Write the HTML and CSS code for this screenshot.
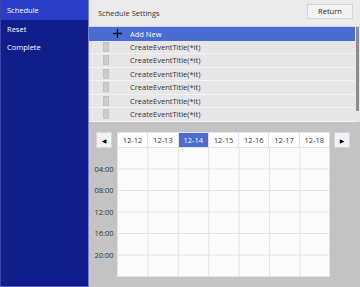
FILE: index.html
```html
<!DOCTYPE html>
<html>
<head>
    <title>Schedule Settings</title>
    <meta charset=utf-8>
    <meta name=viewport content="width=device-width, initial-scale=1">
    <link rel="stylesheet" href="styles.css">
</head>
<body>
    <div id="app">
        <div id="side">
            <div class="menu active">Schedule</div>
            <div class="menu">Reset</div>
            <div class="menu">Complete</div>
        </div>
        <div id="main">
            <div id="head">
                <span class="title">Schedule Settings</span>
                <button class="btn-return">Return</button>
            </div>
            <div id="list">
                <div class="rows">
                    <div class="row add">
                        <svg class="plus" width="9" height="9" viewBox="0 0 9 9"><path d="M4.5 0V9M0 4.5H9" stroke="#111" stroke-width="1.4"/></svg>
                        <span>Add New</span>
                    </div>
                    <div class="row"><i class="chk"></i><span>CreateEventTitle(*it)</span></div>
                    <div class="row"><i class="chk"></i><span>CreateEventTitle(*it)</span></div>
                    <div class="row"><i class="chk"></i><span>CreateEventTitle(*it)</span></div>
                    <div class="row"><i class="chk"></i><span>CreateEventTitle(*it)</span></div>
                    <div class="row"><i class="chk"></i><span>CreateEventTitle(*it)</span></div>
                    <div class="row"><i class="chk"></i><span>CreateEventTitle(*it)</span></div>
                </div>
                <div class="scroll"><div class="thumb"></div></div>
            </div>
            <div id="cal">
                <div class="times">
                    <button class="nav">&#9664;</button>
                    <div class="hours">
                        <span>04:00</span>
                        <span>08:00</span>
                        <span>12:00</span>
                        <span>16:00</span>
                        <span>20:00</span>
                    </div>
                </div>
                <div class="week">
                    <div class="days">
                        <div class="day">12-12</div>
                        <div class="day">12-13</div>
                        <div class="day on">12-14</div>
                        <div class="day">12-15</div>
                        <div class="day">12-16</div>
                        <div class="day">12-17</div>
                        <div class="day">12-18</div>
                    </div>
                    <div class="grid"></div>
                </div>
                <div class="right">
                    <button class="nav">&#9654;</button>
                </div>
            </div>
        </div>
    </div>
</body>
</html>
```

FILE: styles.css
```css
body{
    margin:0;
    font-family: "Open Sans", "Noto Sans", sans-serif;
    font-size: 7.5px;
    background: #c3c3c3;
}
#app{
    display: flex;
    width: 360px;
    height: 287px;
}
#side{
    width: 89px;
    background: #111d8b;
    border-right: 1px solid #7c80d2;
    border-left: 1px solid #3a45a8;
    border-bottom: 1px solid #5a62bc;
    box-sizing: content-box;
    height: 286px;
}
.menu{
    height: 18px;
    line-height: 18px;
    padding-left: 6px;
    color: #fff;
}
.menu.active{
    background: #2a3dc6;
    height: 20px;
    line-height: 20px;
}
#main{
    flex: 1;
    display: flex;
    flex-direction: column;
}
#head{
    height: 27px;
    background: #ebebeb;
    border-bottom: 1px solid #d3d3d3;
    display: flex;
    align-items: center;
    justify-content: space-between;
    padding: 0 7px 0 9px;
    box-sizing: border-box;
    color: #333;
}
.btn-return{
    width: 46px;
    height: 15px;
    margin-top: -4px;
    font: inherit;
    color: #222;
    background: #f3f3f3;
    border: 1px solid #d4d4d4;
    padding: 0;
}
#list{
    display: flex;
    background: #e6e6e6;
    height: 95px;
}
.rows{
    flex: 1;
}
.row{
    height: 13.5px;
    display: flex;
    align-items: center;
    border-bottom: 1px solid #f3f3f3;
    box-sizing: border-box;
    color: #333;
}
.row span{
    margin-left: 21px;
}
.row.add{
    background: #4b6dd1;
    color: #fff;
    border-bottom: none;
}
.row.add .plus{
    margin-left: 24px;
}
.row.add span{
    margin-left: 8px;
}
.chk{
    width: 4px;
    height: 8px;
    margin-left: 14px;
    background: #cdcdcd;
    border: 1px solid #c2c2c2;
}
.scroll{
    width: 4px;
    padding-left: 1px;
}
.thumb{
    width: 3px;
    height: 84px;
    background: #8c8c8c;
}
#cal{
    flex: 1;
    display: flex;
    padding: 10px 10px 10px 5px;
    gap: 3px;
}
.times{
    width: 20px;
    display: flex;
    flex-direction: column;
    align-items: center;
}
.nav{
    width: 16px;
    height: 16px;
    padding: 0;
    background: #f2f2f2;
    border: 1px solid #d6d6d6;
    font-size: 6px;
    color: #000;
    font-family: "DejaVu Sans", sans-serif;
}
.hours{
    display: flex;
    flex-direction: column;
    padding-top: 15.5px;
    color: #333;
}
.hours span{
    height: 21.5px;
    line-height: 11px;
}
.week{
    width: 213px;
    display: flex;
    flex-direction: column;
}
.days{
    display: flex;
    height: 16px;
}
.day{
    flex: 1;
    background: #fff;
    border: 1px solid #e2e2e2;
    border-left: none;
    text-align: center;
    line-height: 14px;
    color: #333;
}
.day:first-child{
    border-left: 1px solid #e2e2e2;
}
.day.on{
    background: #4b6dd1;
    color: #fff;
}
.grid{
    height: 129px;
    background-color: #fbfbfb;
    background-image:
        linear-gradient(to right, #e3e3e3 1px, transparent 1px),
        linear-gradient(to bottom, transparent 20.5px, #e3e3e3 20.5px);
    background-size: 30.43px 100%, 100% 21.5px;
    border-right: 1px solid #e3e3e3;
}
.right{
    padding-left: 1px;
}
```
